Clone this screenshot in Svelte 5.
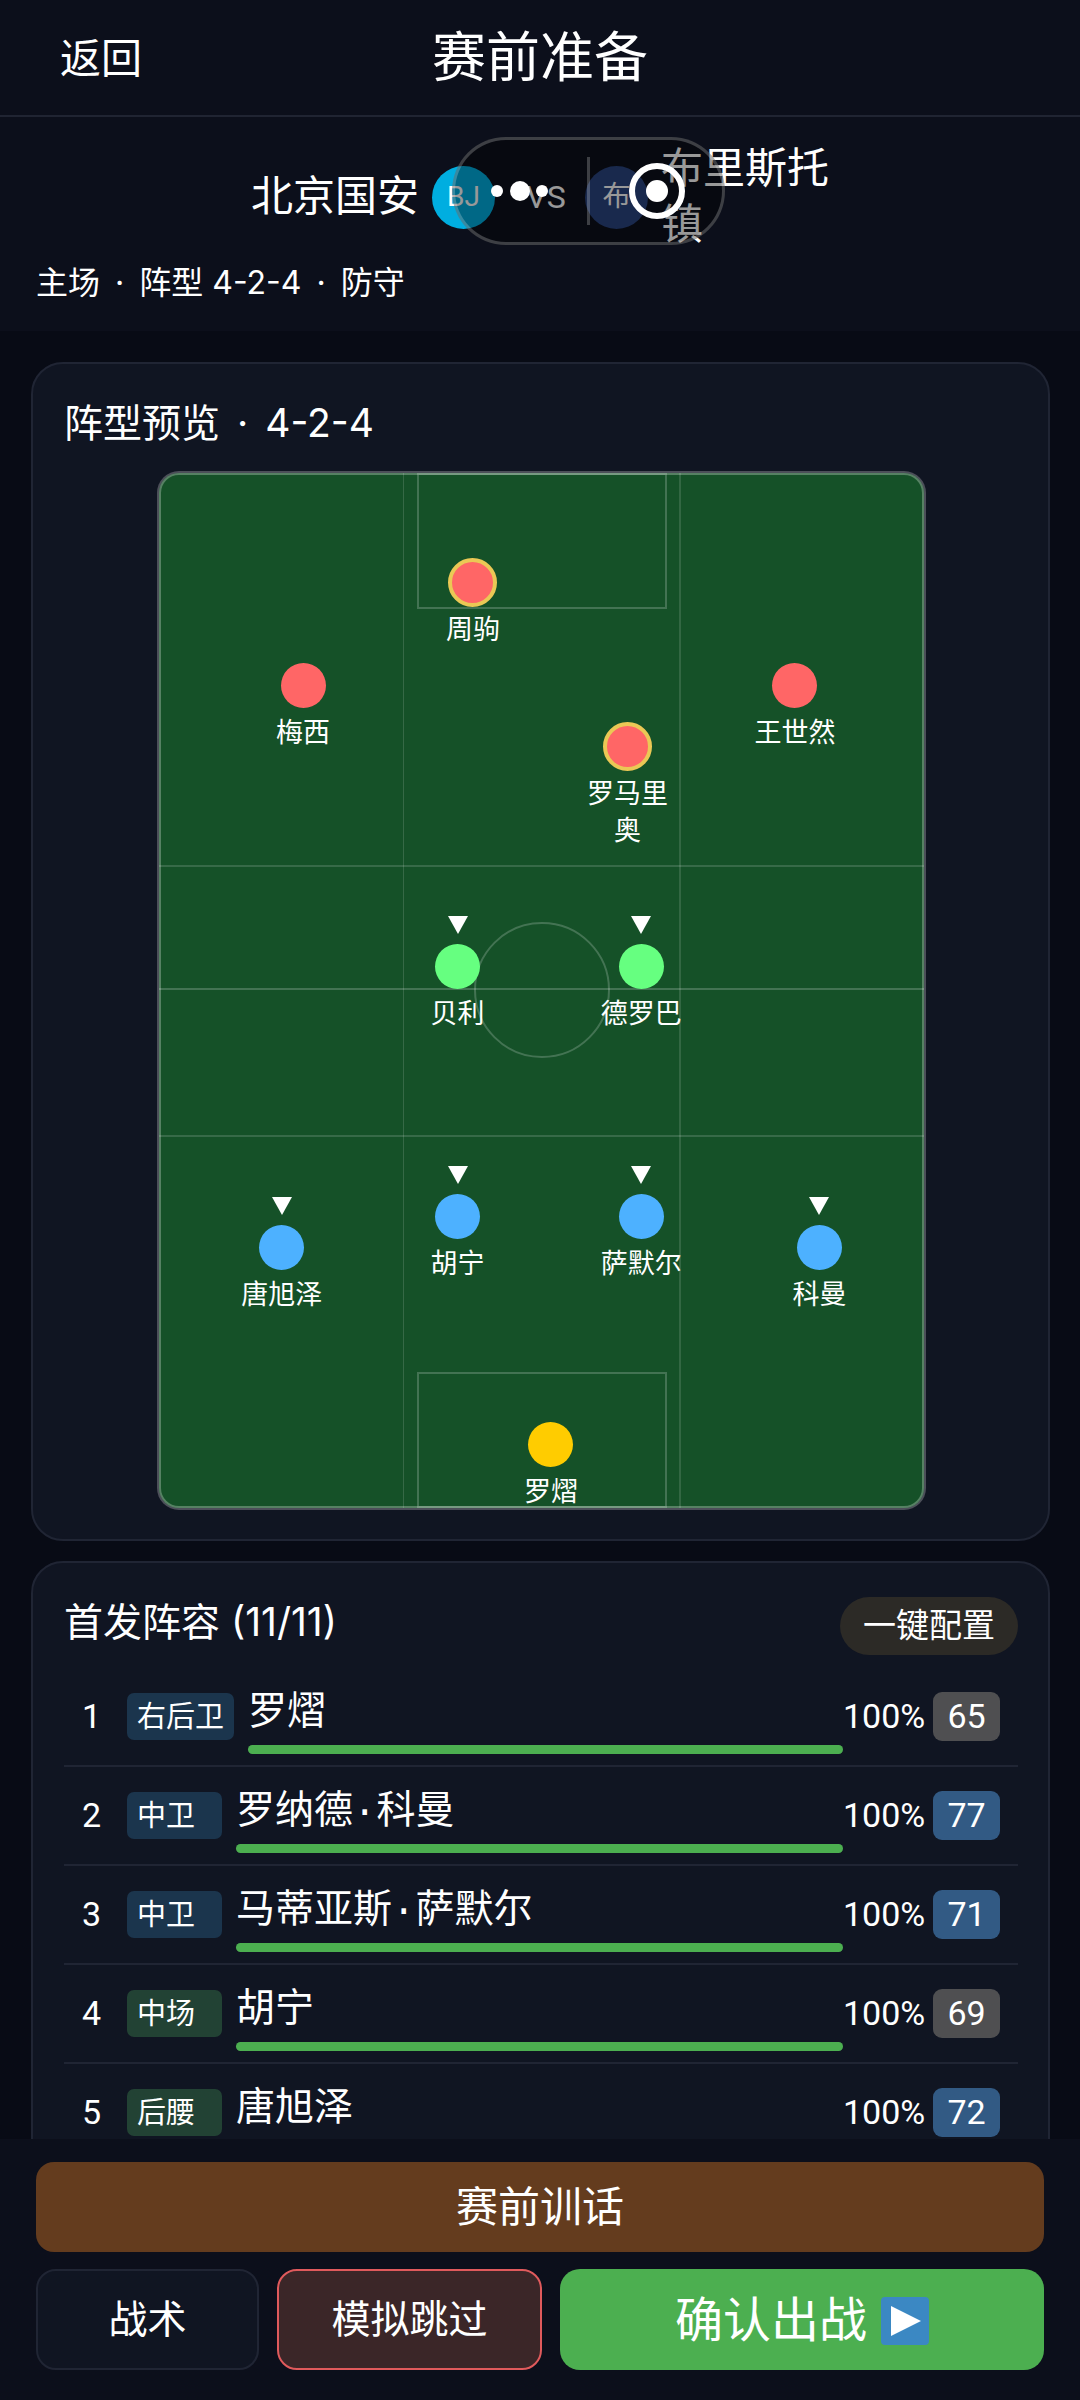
<script lang="ts">
	type Player = {
		name: string;
		x: number;
		y: number;
		role: 'fwd' | 'mid' | 'def' | 'gk';
		key?: boolean;
		arrow?: boolean;
	};

	// x and y are percentages of the pitch
	const players: Player[] = [
		{ name: '周驹', x: 41.1, y: 10.5, role: 'fwd', key: true },
		{ name: '梅西', x: 18.9, y: 20.5, role: 'fwd' },
		{ name: '王世然', x: 83.2, y: 20.5, role: 'fwd' },
		{ name: '罗马里奥', x: 61.3, y: 26.4, role: 'fwd', key: true },
		{ name: '贝利', x: 39.1, y: 47.6, role: 'mid', arrow: true },
		{ name: '德罗巴', x: 63.1, y: 47.6, role: 'mid', arrow: true },
		{ name: '唐旭泽', x: 16.1, y: 74.8, role: 'def', arrow: true },
		{ name: '胡宁', x: 39.1, y: 71.8, role: 'def', arrow: true },
		{ name: '萨默尔', x: 63.1, y: 71.8, role: 'def', arrow: true },
		{ name: '科曼', x: 86.4, y: 74.8, role: 'def', arrow: true },
		{ name: '罗熠', x: 51.3, y: 93.8, role: 'gk' }
	];

	const lineup = [
		{ pos: '右后卫', line: 'def', name: '罗熠', fitness: 100, rating: 65 },
		{ pos: '中卫', line: 'def', name: '罗纳德·科曼', fitness: 100, rating: 77 },
		{ pos: '中卫', line: 'def', name: '马蒂亚斯·萨默尔', fitness: 100, rating: 71 },
		{ pos: '中场', line: 'mid', name: '胡宁', fitness: 100, rating: 69 },
		{ pos: '后腰', line: 'mid', name: '唐旭泽', fitness: 100, rating: 72 }
	];
</script>

<div class="page">
	<header class="topbar">
		<button class="back">返回</button>
		<h1>赛前准备</h1>
	</header>

	<section class="match">
		<div class="teams">
			<span class="team">北京国安</span>
			<span class="crest home">BJ</span>
			<span class="vs">VS</span>
			<span class="crest away">布</span>
			<span class="team">布里斯托镇</span>
		</div>
		<p class="info">
			<span>主场</span><span>·</span><span>阵型 4-2-4</span><span>·</span><span>防守</span>
		</p>

		<div class="capsule">
			<button aria-label="更多">
				<svg width="62" height="24" viewBox="0 0 62 24" fill="#fff">
					<circle cx="7" cy="12" r="6" />
					<circle cx="30" cy="12" r="10" />
					<circle cx="52" cy="12" r="6" />
				</svg>
			</button>
			<span class="divider"></span>
			<button aria-label="关闭">
				<svg width="58" height="58" viewBox="0 0 58 58" fill="#fff">
					<circle cx="30" cy="29" r="25" fill="none" stroke="#fff" stroke-width="6" />
					<circle cx="30" cy="29" r="11" />
				</svg>
			</button>
		</div>
	</section>

	<main>
		<section class="card">
			<h2 class="formation"><span>阵型预览</span><span>·</span><span>4-2-4</span></h2>
			<div class="pitch">
				<svg class="lines" viewBox="0 0 765 1035" fill="none" stroke="#fff">
					<path d="M244.5 0V1035" stroke-width="1" opacity=".14" />
					<path d="M521 0V1035" stroke-width="2" opacity=".13" />
					<path d="M0 393H765M0 663H765" stroke-width="2" opacity=".15" />
					<path d="M0 516H765" stroke-width="2" opacity=".2" />
					<rect x="259" y="1" width="248" height="134" stroke-width="2" opacity=".2" />
					<rect x="259" y="900" width="248" height="134" stroke-width="2" opacity=".2" />
					<circle cx="383" cy="517" r="67" stroke-width="2" opacity=".2" />
				</svg>
				{#each players as p}
					<div class="player" style="left: {p.x}%; top: {p.y}%">
						{#if p.arrow}
							<svg class="arrow" width="20" height="18" viewBox="0 0 20 18">
								<path d="M0 0H20L10 18Z" fill="#fff" />
							</svg>
						{/if}
						<span class="dot {p.role}" class:key={p.key}></span>
						<span class="player-name">{p.name}</span>
					</div>
				{/each}
			</div>
		</section>

		<section class="card">
			<div class="card-head">
				<h2>首发阵容 (11/11)</h2>
				<button class="auto">一键配置</button>
			</div>
			<ul>
				{#each lineup as p, i}
					<li>
						<span class="num">{i + 1}</span>
						<span class="pos {p.line}">{p.pos}</span>
						<div class="who">
							<span class="name">{p.name}</span>
							<div class="bar"><div class="fill" style="width: {p.fitness}%"></div></div>
						</div>
						<span class="fitness">{p.fitness}%</span>
						<span class="rating" class:good={p.rating >= 70}>{p.rating}</span>
					</li>
				{/each}
			</ul>
		</section>
	</main>

	<footer>
		<button class="talk">赛前训话</button>
		<div class="actions">
			<button class="tactics">战术</button>
			<button class="skip">模拟跳过</button>
			<button class="confirm">
				确认出战
				<svg width="48" height="48" viewBox="0 0 48 48">
					<rect width="48" height="48" rx="4" fill="#3b88c3" />
					<path d="M10 9L40 24L10 39Z" fill="#fff" />
				</svg>
			</button>
		</div>
	</footer>
</div>

<style>
	:global(body) {
		margin: 0;
		background: #080b15;
	}

	.page {
		display: flex;
		flex-direction: column;
		height: 100vh;
		color: #fff;
		font-family: Roboto, 'Noto Sans CJK SC', sans-serif;
		font-size: 34px;
		line-height: 1.2;
	}

	h1,
	h2,
	p,
	ul {
		margin: 0;
		padding: 0;
		font-weight: 400;
	}

	button {
		border: none;
		padding: 0;
		background: none;
		color: inherit;
		font: inherit;
		cursor: pointer;
	}

	.topbar {
		display: grid;
		grid-template-columns: 1fr auto 1fr;
		align-items: center;
		height: 111px;
		padding: 4px 60px 0;
		background: #0c0f1b;
		border-bottom: 2px solid #202432;
	}

	.back {
		justify-self: start;
		font-size: 41px;
	}

	h1 {
		font-size: 54px;
	}

	.match {
		position: relative;
		padding: 24px 36px;
		background: #0c0f1b;
	}

	.teams {
		display: flex;
		align-items: center;
		justify-content: center;
		font-size: 42px;
		line-height: 56px;
	}

	.team {
		width: 168px;
	}

	.crest {
		display: flex;
		align-items: center;
		justify-content: center;
		width: 63px;
		height: 63px;
		margin: 0 13px;
		border-radius: 50%;
		font-size: 28px;
	}

	.home {
		background: #00aee0;
	}

	.away {
		background: #2a4580;
	}

	.vs {
		box-sizing: border-box;
		width: 64px;
		padding-left: 12px;
		text-align: center;
		font-size: 32px;
	}

	.info {
		display: flex;
		gap: 15px;
		margin-top: 6px;
		font-family: Inter, 'Noto Sans CJK SC', sans-serif;
		font-size: 32px;
		line-height: 48px;
	}

	.capsule {
		position: absolute;
		top: 20px;
		left: 452px;
		display: flex;
		align-items: center;
		box-sizing: border-box;
		width: 273px;
		height: 108px;
		border: 3px solid rgba(255, 255, 255, 0.22);
		border-radius: 54px;
		background: rgba(0, 0, 0, 0.4);
	}

	.capsule button {
		display: flex;
		flex: 1;
		justify-content: center;
	}

	.divider {
		width: 3px;
		height: 68px;
		background: rgba(255, 255, 255, 0.22);
	}

	main {
		flex: 1;
		min-height: 0;
		overflow: hidden;
		padding: 31px 30px 0 31px;
	}

	.card {
		margin-bottom: 20px;
		padding: 31px 30px 29px 31px;
		border: 2px solid #202534;
		border-radius: 32px;
		background: #101522;
	}

	h2 {
		font-family: Inter, 'Noto Sans CJK SC', sans-serif;
		font-size: 39px;
		line-height: 56px;
	}

	.formation {
		display: flex;
		gap: 17px;
	}

	/* half of the frame lies on the grass, half on the card */
	.pitch {
		position: relative;
		max-width: 765px;
		aspect-ratio: 765 / 1035;
		margin: 22px auto 2px;
		border-radius: 20px;
		background: #155128;
		box-shadow:
			0 0 0 2px rgba(255, 255, 255, 0.25),
			inset 0 0 0 2px rgba(255, 255, 255, 0.28);
	}

	.lines {
		display: block;
		width: 100%;
		height: 100%;
	}

	.player {
		position: absolute;
		display: flex;
		flex-direction: column;
		align-items: center;
		gap: 7px;
		width: 84px;
		margin: -22px 0 0 -42px;
	}

	.arrow {
		position: absolute;
		top: -28px;
	}

	.dot {
		width: 45px;
		height: 45px;
		border-radius: 50%;
	}

	.dot.fwd {
		background: #ff6666;
	}

	.dot.mid {
		background: #66ff80;
	}

	.dot.def {
		background: #4db1ff;
	}

	.dot.gk {
		background: #ffcc00;
	}

	.dot.key {
		outline: 4px solid #ebc855;
		outline-offset: -2px;
	}

	.player-name {
		font-size: 27px;
		line-height: 37px;
		text-align: center;
	}

	.card-head {
		display: flex;
		justify-content: space-between;
		height: 61px;
		margin-bottom: 13px;
	}

	.auto {
		align-self: flex-end;
		height: 58px;
		padding: 0 23px;
		border-radius: 29px;
		background: #2c2a26;
		font-size: 33px;
		line-height: 58px;
	}

	ul {
		list-style: none;
	}

	li {
		display: flex;
		align-items: center;
		padding: 11px 18px;
		border-bottom: 2px solid #202534;
	}

	.num {
		width: 45px;
	}

	.pos {
		box-sizing: border-box;
		min-width: 95px;
		margin-right: 14px;
		padding: 2px 10px 0;
		border-radius: 7px;
		font-size: 29px;
		line-height: 45px;
	}

	.pos.def {
		background: #1b354d;
	}

	.pos.mid {
		background: #224234;
	}

	.who {
		display: flex;
		flex: 1;
		flex-direction: column;
	}

	.name {
		padding-top: 4px;
		font-family: 'Liberation Mono', 'Noto Sans CJK SC', monospace;
		font-size: 39px;
		line-height: 62px;
	}

	.bar {
		height: 9px;
		border-radius: 5px;
		background: #202534;
	}

	.fill {
		height: 100%;
		border-radius: 5px;
		background: #4caf50;
	}

	.fitness {
		width: 90px;
	}

	.rating {
		width: 67px;
		border-radius: 9px;
		background: #4f4f51;
		line-height: 49px;
		text-align: center;
	}

	.rating.good {
		background: #325a84;
	}

	footer {
		display: flex;
		flex-direction: column;
		gap: 17px;
		padding: 23px 36px 30px;
		background: #0c0f1b;
	}

	footer button {
		padding-top: 2px;
	}

	.talk {
		height: 90px;
		border-radius: 18px;
		background: #643c1e;
		font-size: 42px;
	}

	.actions {
		display: grid;
		grid-template-columns: 223fr 265fr 484fr;
		gap: 18px;
		height: 101px;
	}

	.actions button {
		border-radius: 20px;
		font-size: 39px;
	}

	.actions .tactics {
		border: 2px solid #202534;
		background: #101522;
	}

	.actions .skip {
		border: 2px solid #e05a5c;
		background: #3b2628;
	}

	.actions .confirm {
		display: flex;
		align-items: center;
		justify-content: center;
		gap: 14px;
		background: #4caf50;
		font-size: 48px;
	}
</style>
